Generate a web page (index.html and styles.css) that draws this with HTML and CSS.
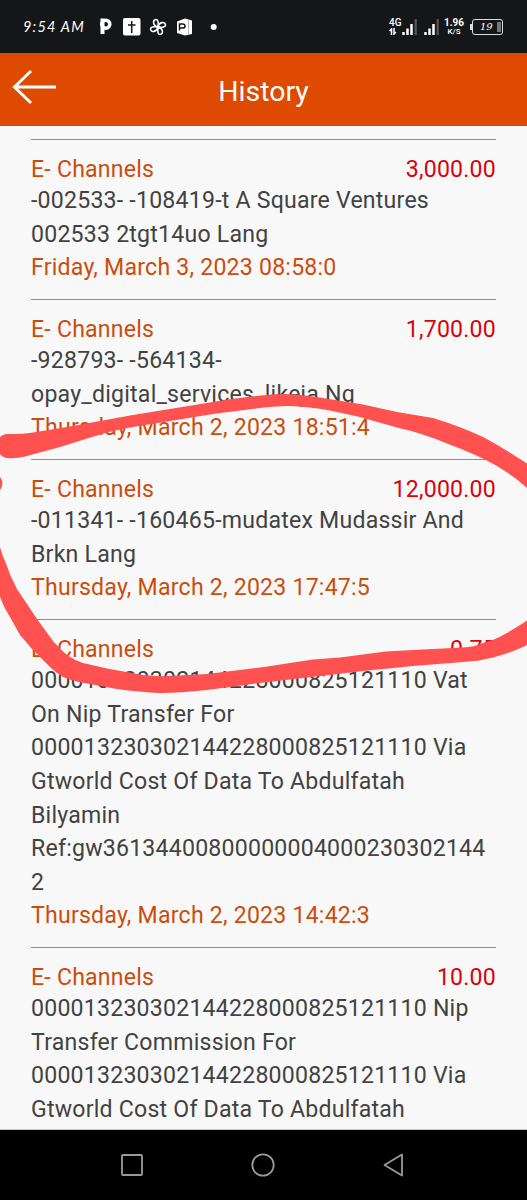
FILE: index.html
```
<!DOCTYPE html>
<html lang="en">
<head>
  <meta charset="UTF-8" />
  <title>History</title>
  <link rel="stylesheet" href="styles.css">
</head>
<body>
  <div class="screen">
    <!-- Status bar -->
    <div class="status-bar">
      <span class="time">9:54 AM</span>
      <svg class="notifications" width="130" height="22" viewBox="0 0 130 22">
        <path d="M3.500 2.500V18" stroke="#fff" stroke-width="4" fill="none" />
        <circle cx="6.800" cy="8.200" r="4" stroke="#fff" stroke-width="3.600" fill="none" />
        <rect x="24" y="2" width="17.500" height="17.500" rx="2" fill="#fff" />
        <path d="M32.700 5v12M29 9h7.500" stroke="#151618" stroke-width="1.500" />
        <g stroke="#fff" stroke-width="1.600" fill="none" stroke-linejoin="round">
          <path d="M59 11C54 10 53 4 57 3.500Q60 3.500 59 11" />
          <path d="M59 11C60 6 66 5 66.500 9Q66.500 12 59 11" />
          <path d="M59 11C64 12 65 18 61 18.500Q58 18.500 59 11" />
          <path d="M59 11C58 16 52 17 51.500 13Q51.500 10 59 11" />
        </g>
        <path d="M86 2.500L93 4.500V18L86 19.500L78 17V5.500Z" fill="#fff" />
        <path d="M80.500 14.500V8H83.500Q86 8 86 10.200Q86 12 83.500 12H81" stroke="#151618" stroke-width="1.500" fill="none" />
        <path d="M89.500 4V18.500" stroke="#bbb" stroke-width="1" />
        <circle cx="114.700" cy="11" r="3" fill="#fff" />
      </svg>
      <div class="status-right">
        <div class="network">
          <span>4G</span>
          <svg width="8" height="7" viewBox="0 0 8 7">
            <path d="M2.500 7V1L.5 3M5 0V6L7 4" stroke="#fff" stroke-width="1.500" fill="none" />
          </svg>
        </div>
        <svg class="signal" width="15" height="16" viewBox="0 0 15 16">
          <path d="M1.500 13v3M5.500 9.500V16M9.500 5V16" stroke="#fff" stroke-width="2.500" />
          <path d="M13.700 0V16" stroke="#555658" stroke-width="2.200" />
        </svg>
        <svg class="signal second" width="15" height="16" viewBox="0 0 15 16">
          <path d="M1.500 13v3M5.500 9.500V16M9.500 5V16" stroke="#fff" stroke-width="2.500" />
          <path d="M13.700 0V16" stroke="#555658" stroke-width="2.200" />
        </svg>
        <div class="speed"><span>1.96</span><small>K/S</small></div>
        <div class="battery">19</div>
      </div>
    </div>

    <!-- Header -->
    <div class="header">
      <svg class="back" width="45" height="36" viewBox="0 0 45 36">
        <path d="M44 18H3M19 2L2.500 18L19 34" stroke="#fff" stroke-width="3" fill="none" />
      </svg>
      <h1>History</h1>
    </div>

    <!-- Transactions -->
    <div class="list">
      <div class="item">
        <div class="row"><span>E- Channels</span><span class="amount">3,000.00</span></div>
        <p>-002533- -108419-t A Square Ventures 002533 2tgt14uo Lang</p>
        <div class="date">Friday, March 3, 2023 08:58:0</div>
      </div>
      <div class="item">
        <div class="row"><span>E- Channels</span><span class="amount">1,700.00</span></div>
        <p>-928793- -564134-<br>opay_digital_services_likeja Ng</p>
        <div class="date">Thursday, March 2, 2023 18:51:4</div>
      </div>
      <div class="item">
        <div class="row"><span>E- Channels</span><span class="amount">12,000.00</span></div>
        <p>-011341- -160465-mudatex Mudassir And Brkn Lang</p>
        <div class="date">Thursday, March 2, 2023 17:47:5</div>
      </div>
      <div class="item">
        <div class="row"><span>E- Channels</span><span class="amount">0.75</span></div>
        <p>000013230302144228000825121110 Vat On Nip Transfer For 000013230302144228000825121110 Via Gtworld Cost Of Data To Abdulfatah Bilyamin<br>Ref:gw36134400800000004000230302144<wbr>2</p>
        <div class="date">Thursday, March 2, 2023 14:42:3</div>
      </div>
      <div class="item">
        <div class="row"><span>E- Channels</span><span class="amount">10.00</span></div>
        <p>000013230302144228000825121110 Nip Transfer Commission For 000013230302144228000825121110 Via Gtworld Cost Of Data To Abdulfatah</p>
      </div>
    </div>

    <!-- Navigation bar -->
    <div class="nav-bar">
      <svg width="24" height="24" viewBox="0 0 24 24"><rect x="2" y="2" width="20" height="20" rx="1" /></svg>
      <svg width="24" height="24" viewBox="0 0 24 24"><circle cx="12" cy="12" r="10.700" /></svg>
      <svg width="24" height="24" viewBox="0 0 24 24"><path d="M20 1.500V22.500L2.500 12Z" /></svg>
    </div>

    <!-- Red marker circle -->
    <svg class="marker" width="527" height="1200" viewBox="0 0 527 1200">
      <path d="M0 437Q3 434 8 434Q23 434 33 432.500L67 427L100 421L133 415L173 408.500L213 402Q240 397.500 264 395.300Q288 392 313 396.500L363 404.500L397 412L433 418Q462 427 483 437Q500 446 527 463.500V488Q515 477 497 466Q478 455 447 443.500Q422 433 397 427.500L360 417L330 410.500Q305 406 287 406Q276 406 264 407.500L213 414L133 427Q115 430 100 434.500L60 447L25 456.500Q15 459 7 458Q2 457 0 454Z" />
      <path d="M0 477Q5 483 0 490Z" />
      <path d="M0 547Q2 555 5 561Q10 576 17 589L37 619L53 641Q60 649 67 655Q74 660 83 663L107 668.500L143 675Q155 676.500 167 676L207 674L264 667L313 659.500L340 657.500L386 651.500L413 650L463 647.500Q474 647 483 643Q495 640 506 633.500Q519 626 527 620.500V645Q511 653 493 657.500Q480 661 463 662L413 666L363 671L264 682.500L207 690Q180 693 160 693Q140 692 117 689L90 684Q75 682 63 677Q55 672 50 667L33 650L20 635L10 617Q4 608 0 597Z" />
    </svg>
  </div>
</body>
</html>
```
FILE: styles.css
```
body {
  margin: 0;
  background-color: #f8f8f8;
  font-family: Roboto, sans-serif;
}

.screen {
  position: relative;
  display: flex;
  flex-direction: column;
  height: 1200px;
  overflow: hidden;
}

.status-bar {
  box-sizing: border-box;
  display: flex;
  align-items: center;
  flex-shrink: 0;
  height: 53px;
  padding: 0 24px 0 23px;
  background-color: #151618;
  color: #fff;
}

.time {
  width: 76px;
  font-family: Lato, sans-serif;
  font-style: italic;
  font-size: 14.5px;
  letter-spacing: 1.2px;
  white-space: nowrap;
}

.status-right {
  display: flex;
  align-items: center;
  margin-left: auto;
}

.network {
  display: flex;
  flex-direction: column;
  width: 13px;
  font-size: 10px;
  font-weight: 500;
  line-height: 10px;
}

.signal {
  flex-shrink: 0;
}

.second {
  margin-left: 7px;
}

.speed {
  display: flex;
  flex-direction: column;
  align-items: center;
  width: 20px;
  margin: 0 8px 0 5px;
  font-size: 10px;
  font-weight: 700;
  line-height: 10px;
}

.speed small {
  font-size: 8px;
  font-weight: 500;
  line-height: 8px;
}

.battery {
  position: relative;
  box-sizing: border-box;
  width: 31px;
  height: 16px;
  padding-left: 7px;
  border: 1.5px solid #ddd;
  border-radius: 3px;
  font-family: "DejaVu Serif", serif;
  font-style: italic;
  font-size: 10px;
  line-height: 14px;
}

.battery::before {
  content: "";
  position: absolute;
  left: -3px;
  top: 4px;
  width: 2px;
  height: 6px;
  background-color: #ddd;
}

.battery::after {
  content: "";
  position: absolute;
  right: 1px;
  top: 2px;
  width: 4px;
  height: 10px;
  background-color: #77787a;
}

.header {
  display: grid;
  grid-template-columns: 58px 1fr 58px;
  align-items: center;
  flex-shrink: 0;
  height: 73px;
  background-color: #dd4a00;
  color: #fff;
}

.back {
  margin: -5px 0 0 12px;
}

.header h1 {
  margin: 3px 0 0;
  font-size: 28.5px;
  font-weight: 400;
  text-align: center;
}

.list {
  flex: 1;
  min-height: 0;
  padding: 13px 31px 0;
  border-bottom: 1px solid #ccc;
  overflow: hidden;
  font-size: 23.1px;
  letter-spacing: 0.22px;
  line-height: 33.6px;
  color: #424242;
}

.item {
  padding: 16px 0 14px;
  border-top: 1px solid #8e8e8e;
}

.row {
  display: flex;
  justify-content: space-between;
  line-height: 28.2px;
  color: #cb4d0c;
}

.amount {
  color: #d6040e;
}

.item p {
  margin: 0;
}

.date {
  color: #cb4d0c;
}

.nav-bar {
  box-sizing: border-box;
  display: flex;
  align-items: center;
  justify-content: space-between;
  flex-shrink: 0;
  height: 70px;
  padding: 0 121px 0 120px;
  background-color: #000;
}

.nav-bar svg {
  fill: none;
  stroke: #999;
  stroke-width: 1.8;
  stroke-linejoin: round;
}

/* drawn over the whole screen */
.marker {
  position: absolute;
  top: 0;
  left: 0;
  fill: #ff5150;
}
```
